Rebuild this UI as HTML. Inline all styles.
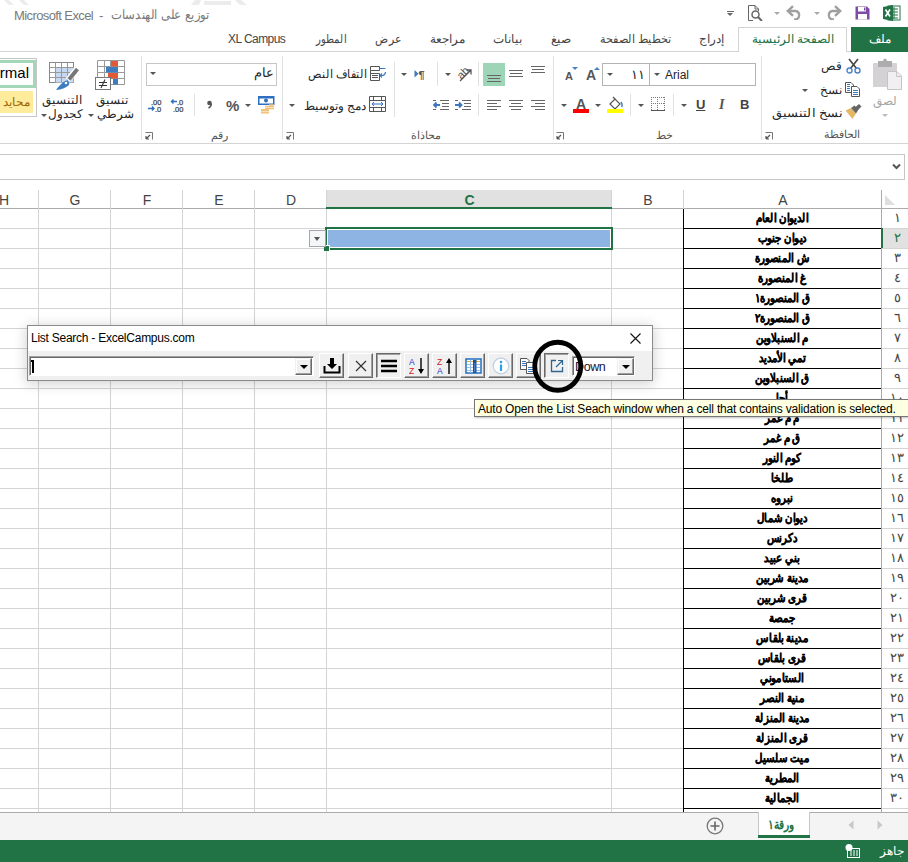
<!DOCTYPE html>
<html><head><meta charset="utf-8">
<style>
*{box-sizing:border-box}
html,body{margin:0;padding:0;width:908px;height:862px;overflow:hidden;background:#fff;font-family:"Liberation Sans",sans-serif;color:#262626}
.a{position:absolute}
.rtl{direction:rtl}
.t{white-space:nowrap;line-height:1}
/* tabs */
.tab{position:absolute;top:32px;font-size:12px;color:#444;white-space:nowrap;direction:rtl;line-height:14px}
/* grid */
#grid{position:absolute;left:0;top:190px;width:908px;height:622px;overflow:hidden;background:#fff}
.vl{position:absolute;top:0;width:1px;background:#d4d4d4}
.hl{position:absolute;left:0;height:1px;background:#d4d4d4}
.ch{position:absolute;top:3px;font-size:13px;color:#444;line-height:14px;text-align:center}
.rn{position:absolute;left:882px;width:26px;text-align:center;font-size:12px;color:#444;line-height:20px}
.av{position:absolute;left:683px;width:199px;text-align:center;font-size:12px;font-weight:bold;color:#000;line-height:20px;direction:rtl}
.glab{position:absolute;top:131px;font-size:11px;color:#444;direction:rtl;white-space:nowrap;line-height:11px}
.sep{position:absolute;width:1px;background:#e1e1e1}
.dd{position:absolute;width:0;height:0;border-left:3px solid transparent;border-right:3px solid transparent;border-top:3px solid #555}
.btn{position:absolute;top:353px;width:25px;height:25px;background:#f0f0f0;border:1px solid;border-color:#fff #696969 #696969 #fff;box-shadow:inset -1px -1px 0 #a0a0a0}
</style></head><body>

<!-- ===== TITLE BAR ===== -->
<svg class="a" style="left:0;top:0" width="260" height="6" viewBox="0 0 260 6"><path d="M4 0H9L14 5H9Z M19 0H24L29 5H24Z M195 0H201L199 5H191Z M204 1H231V5H204Z M235 0H241L247 5H240Z" fill="#ececec"/></svg>
<div class="a t" style="left:14px;top:9px;font-size:13px;color:#7a7a7a;letter-spacing:-0.6px">Microsoft Excel</div>
<div class="a t" style="left:99px;top:9px;font-size:13px;color:#7a7a7a">-</div>
<div class="a t" style="right:698px;top:9px;font-size:12.5px;color:#7a7a7a;direction:rtl;transform:scaleX(0.9);transform-origin:100% 50%">توزيع على الهندسات</div>

<!-- ===== TABS ===== -->
<div class="a" style="left:0;top:51px;width:908px;height:1px;background:#d4d4d4"></div>
<div class="a" style="left:851px;top:27px;width:57px;height:25px;background:#217346"></div>
<div class="tab" style="left:869px;color:#fff;font-weight:normal">ملف</div>
<div class="a" style="left:738px;top:27px;width:109px;height:25px;border:1px solid #d4d4d4;border-bottom:none;background:#fff"></div>
<div class="tab" style="left:752px;color:#217346">الصفحة الرئيسية</div>
<div class="tab" style="left:699px">إدراج</div>
<div class="tab" style="left:600px;transform:scaleX(0.934);transform-origin:0 50%">تخطيط الصفحة</div>
<div class="tab" style="left:551px">صيغ</div>
<div class="tab" style="left:493px">بيانات</div>
<div class="tab" style="left:430px">مراجعة</div>
<div class="tab" style="left:375px;transform:scaleX(0.9);transform-origin:0 50%">عرض</div>
<div class="tab" style="left:316px;transform:scaleX(0.84);transform-origin:0 50%">المطور</div>
<div class="tab" style="left:228px;direction:ltr;font-size:12px;letter-spacing:-0.55px">XL Campus</div>

<!-- ===== RIBBON ===== -->
<div class="a" style="left:0;top:143px;width:908px;height:1px;background:#d4d4d4"></div>
<div class="sep" style="left:761px;top:56px;height:84px"></div>
<div class="sep" style="left:553px;top:56px;height:84px"></div>
<div class="sep" style="left:282px;top:56px;height:84px"></div>
<div class="sep" style="left:141px;top:56px;height:84px"></div>

<svg class="a" style="left:883px;top:5px" width="18" height="16" viewBox="0 0 18 16"><rect x="5" y="1" width="12" height="14" fill="#fff" stroke="#217346"/><path d="M8 4h7M8 7h7M8 10h7M8 13h7M11 2v12" stroke="#217346" stroke-width="1"/><path d="M0 2L10 0V16L0 14Z" fill="#217346"/><path d="M2.5 4.5L7 11.5M7 4.5L2.5 11.5" stroke="#fff" stroke-width="1.6"/></svg>
<svg class="a" style="left:855px;top:6px" width="15" height="14" viewBox="0 0 15 14"><path d="M0.5 0.5H12L14.5 3V13.5H0.5Z" fill="#7d4ca6"/><rect x="3" y="1" width="8" height="4.5" fill="#fff"/><rect x="3" y="8" width="9" height="5.5" fill="#fff"/><rect x="9" y="1.5" width="1.5" height="3" fill="#7d4ca6"/></svg>
<svg class="a" style="left:826px;top:5px" width="16" height="15" viewBox="0 0 16 15"><path d="M14 6H6.5A4.3 4.3 0 0 0 6.5 14.5H8" fill="none" stroke="#a0a0a0" stroke-width="2.4"/><path d="M9 1.2L14.2 6L9 10.8" fill="none" stroke="#a0a0a0" stroke-width="2.4"/></svg>
<div class="a" style="left:814px;top:12px;width:0;height:0;border-left:3px solid transparent;border-right:3px solid transparent;border-top:3px solid #aaa"></div>
<svg class="a" style="left:786px;top:5px" width="16" height="15" viewBox="0 0 16 15"><path d="M2 6H9.5A4.3 4.3 0 0 1 9.5 14.5H8" fill="none" stroke="#a0a0a0" stroke-width="2.4"/><path d="M7 1.2L1.8 6L7 10.8" fill="none" stroke="#a0a0a0" stroke-width="2.4"/></svg>
<div class="a" style="left:774px;top:12px;width:0;height:0;border-left:3px solid transparent;border-right:3px solid transparent;border-top:3px solid #aaa"></div>
<svg class="a" style="left:747px;top:5px" width="16" height="16" viewBox="0 0 16 16"><path d="M1.5 0.5H8L11.5 4V6M1.5 0.5V15.5H6" fill="none" stroke="#666"/><path d="M8 0.5V4H11.5" fill="none" stroke="#666"/><circle cx="8.5" cy="9.5" r="3.5" fill="none" stroke="#666" stroke-width="1.5"/><path d="M11 12L15 16" stroke="#666" stroke-width="2"/></svg>
<div class="a" style="left:727px;top:11px;width:7px;height:1px;background:#666"></div>
<div class="a" style="left:727px;top:13px;width:0;height:0;border-left:3px solid transparent;border-right:3px solid transparent;border-top:3px solid #666"></div>
<svg class="a" style="left:872px;top:58px" width="30" height="33" viewBox="0 0 30 33"><path d="M1 6Q1 5 2 5H24Q25 5 25 6V29H1Z" fill="#d4d2d4"/><path d="M6 3H11Q11 0.5 13 0.5Q15 0.5 15 3H20V9H6Z" fill="#aeacae"/><path d="M15.5 13.5H25L29.5 18V31.5H15.5Z" fill="#f1eff1" stroke="#c6c4c6"/><path d="M24.5 13.5V18.5H29.5" fill="none" stroke="#c6c4c6"/></svg>
<div class="a t" style="left:873px;top:95px;font-size:12px;color:#a6a6a6;direction:rtl;">لصق</div>
<div class="a" style="left:882px;top:114px;width:0;height:0;border-left:3px solid transparent;border-right:3px solid transparent;border-top:3px solid #bbb"></div>
<svg class="a" style="left:846px;top:58px" width="15" height="16" viewBox="0 0 15 16"><path d="M3 1L10.5 10.5M12 1L4.5 10.5" stroke="#444" stroke-width="1.6"/><circle cx="3.5" cy="12.5" r="2.5" fill="none" stroke="#4a82c4" stroke-width="1.4"/><circle cx="11.5" cy="12.5" r="2.5" fill="none" stroke="#4a82c4" stroke-width="1.4"/></svg>
<div class="a t" style="right:66px;top:60px;font-size:12px;color:#262626;direction:rtl;">قص</div>
<svg class="a" style="left:845px;top:82px" width="16" height="15" viewBox="0 0 16 15"><path d="M0.5 0.5H6L8.5 3V10.5H0.5Z" fill="#fff" stroke="#555"/><path d="M6.5 4.5H12L14.5 7V14.5H6.5Z" fill="#fff" stroke="#555"/><path d="M2 2.5h3M2 4.5h3M2 6.5h3M2 8.5h3M8 8.5h5M8 10.5h5M8 12.5h5" stroke="#3c78c0"/></svg>
<div class="a t" style="right:66px;top:84px;font-size:12px;color:#262626;direction:rtl;">نسخ</div>
<div class="a" style="left:802px;top:89px;width:0;height:0;border-left:3px solid transparent;border-right:3px solid transparent;border-top:3px solid #555"></div>
<svg class="a" style="left:845px;top:104px" width="17" height="16" viewBox="0 0 17 16"><path d="M0.5 6.5L6 4L11 9.5L7.5 15Z" fill="#e4b867"/><path d="M6 4L9.5 1.5L13.5 5.5L11 9.5Z" fill="#666"/><path d="M10.5 3L14 0L16.5 2.5L13 6Z" fill="#666"/></svg>
<div class="a t" style="right:66px;top:107px;font-size:12px;color:#262626;direction:rtl;transform:scaleX(1.08);transform-origin:100% 50%">نسخ التنسيق</div>
<div class="a t" style="right:48px;top:129px;font-size:11px;color:#555;direction:rtl;">الحافظة</div>
<svg class="a" style="left:765px;top:132px" width="8" height="8" viewBox="0 0 8 8"><path d="M0.5 0.5H7.5V7.5" fill="none" stroke="#777" stroke-width="1"/><path d="M1 7L5 3M1 7V4M1 7H4" fill="none" stroke="#555" stroke-width="1.2"/></svg>
<div class="a" style="left:649px;top:63px;width:107px;height:23px;border:1px solid #b4b4b4;background:#fff"></div>
<div class="a" style="left:602px;top:63px;width:48px;height:23px;border:1px solid #b4b4b4;background:#fff"></div>
<div class="a t" style="left:665px;top:69px;font-size:12px;color:#262626">Arial</div>
<div class="a" style="left:654px;top:73px;width:0;height:0;border-left:3px solid transparent;border-right:3px solid transparent;border-top:3px solid #555"></div>
<div class="a" style="left:607px;top:73px;width:0;height:0;border-left:3px solid transparent;border-right:3px solid transparent;border-top:3px solid #555"></div>
<div class="a t" style="right:263px;top:68px;font-size:13px;color:#262626;direction:rtl;">١١</div>
<div class="a t" style="left:586px;top:68px;font-size:14px;color:#555;font-weight:bold">A</div>
<div class="a" style="left:594px;top:67px;width:0;height:0;border-left:3px solid transparent;border-right:3px solid transparent;border-bottom:3px solid #4a82c4"></div>
<div class="a t" style="left:565px;top:71px;font-size:11px;color:#555;font-weight:bold">A</div>
<div class="a" style="left:572px;top:67px;width:0;height:0;border-left:3px solid transparent;border-right:3px solid transparent;border-top:3px solid #4a82c4"></div>
<div class="a t" style="left:740px;top:98px;font-size:13px;font-weight:bold;color:#444">B</div>
<div class="a t" style="left:719px;top:98px;font-size:14px;font-style:italic;font-weight:bold;color:#555;font-family:'Liberation Serif',serif">I</div>
<div class="a t" style="left:696px;top:98px;font-size:13px;font-weight:bold;color:#444;text-decoration:underline">U</div>
<div class="a" style="left:681px;top:104px;width:0;height:0;border-left:3px solid transparent;border-right:3px solid transparent;border-top:3px solid #555"></div>
<div class="sep" style="left:673px;top:94px;height:22px"></div>
<svg class="a" style="left:651px;top:97px" width="14" height="14" viewBox="0 0 14 14"><path d="M0.5 0V13M13.5 0V13M6.5 0V13M0 0.5H14M0 6.5H14" fill="none" stroke="#777" stroke-dasharray="1 1"/><path d="M0 13.5H14" stroke="#555"/></svg>
<div class="a" style="left:638px;top:104px;width:0;height:0;border-left:3px solid transparent;border-right:3px solid transparent;border-top:3px solid #555"></div>
<div class="sep" style="left:630px;top:94px;height:22px"></div>
<svg class="a" style="left:606px;top:96px" width="18" height="18" viewBox="0 0 18 18"><path d="M4 8L9 3L14 8L9 13Z" fill="#fff" stroke="#555" stroke-width="1.2"/><path d="M7 1L9 3" stroke="#555" stroke-width="1.2"/><path d="M15 6Q17 9 15.5 11" fill="none" stroke="#4a82c4" stroke-width="1.5"/><rect x="1" y="13" width="16" height="4" fill="#ff0"/></svg>
<div class="a" style="left:595px;top:104px;width:0;height:0;border-left:3px solid transparent;border-right:3px solid transparent;border-top:3px solid #555"></div>
<div class="a t" style="left:576px;top:97px;font-size:14px;color:#555;font-weight:bold">A</div>
<div class="a" style="left:573px;top:109px;width:16px;height:4px;background:#f00"></div>
<div class="a" style="left:561px;top:104px;width:0;height:0;border-left:3px solid transparent;border-right:3px solid transparent;border-top:3px solid #555"></div>
<div class="a t" style="right:235px;top:130px;font-size:11px;color:#555;direction:rtl;">خط</div>
<svg class="a" style="left:556px;top:132px" width="8" height="8" viewBox="0 0 8 8"><path d="M0.5 0.5H7.5V7.5" fill="none" stroke="#777" stroke-width="1"/><path d="M1 7L5 3M1 7V4M1 7H4" fill="none" stroke="#555" stroke-width="1.2"/></svg>
<div class="a" style="left:483px;top:63px;width:22px;height:23px;background:#9fd5b7"></div>
<svg class="a" style="left:531px;top:65px" width="14" height="8" viewBox="0 0 14 8"><path d="M0 1.5H14M1 4.5H13M0 7.5H14" stroke="#666"/></svg>
<svg class="a" style="left:509px;top:69px" width="14" height="8" viewBox="0 0 14 8"><path d="M0 1.5H14M1 4.5H13M0 7.5H14" stroke="#666"/></svg>
<svg class="a" style="left:487px;top:74px" width="14" height="8" viewBox="0 0 14 8"><path d="M0 1.5H14M1 4.5H13M0 7.5H14" stroke="#666"/></svg>
<div class="sep" style="left:478px;top:62px;height:24px"></div>
<svg class="a" style="left:454px;top:64px" width="19" height="18" viewBox="0 0 19 18"><text x="2" y="13" font-size="11" font-family="Liberation Sans" fill="#555" transform="rotate(-45 8 8)">ab</text><path d="M6 17L17 6M12.5 6H17V10.5" fill="none" stroke="#555" stroke-width="1.3"/></svg>
<div class="a" style="left:445px;top:73px;width:0;height:0;border-left:3px solid transparent;border-right:3px solid transparent;border-top:3px solid #555"></div>
<div class="sep" style="left:437px;top:62px;height:24px"></div>
<svg class="a" style="left:414px;top:69px" width="15" height="11" viewBox="0 0 15 11"><path d="M0.5 1V8.5L4.5 4.75Z" fill="#3c78c0"/><text x="4.5" y="9.5" font-size="11" font-family="Liberation Sans" fill="#555" font-weight="bold">¶</text></svg>
<div class="a" style="left:401px;top:73px;width:0;height:0;border-left:3px solid transparent;border-right:3px solid transparent;border-top:3px solid #555"></div>
<div class="sep" style="left:394px;top:62px;height:55px"></div>
<svg class="a" style="left:370px;top:65px" width="17" height="16" viewBox="0 0 17 16"><path d="M0.5 1.5H9.5V5.5H0.5ZM0.5 15.5V8.5H9.5V15.5ZM2 10.5H8M2 12.5H8M0.5 5.5V8.5" fill="none" stroke="#555"/><path d="M9.5 3.5H15.5" stroke="#3c78c0"/><path d="M15.5 7A3.5 3.5 0 0 1 12 10.5H10M12 8.5L10 10.5L12 12.5" fill="none" stroke="#3c78c0" stroke-width="1.2"/></svg>
<div class="a t" style="right:542px;top:68px;font-size:12px;color:#262626;direction:rtl;transform:scaleX(0.93);transform-origin:100% 50%">التفاف النص</div>
<svg class="a" style="left:531px;top:99px" width="14" height="11" viewBox="0 0 14 11"><path d="M0 1.5H14M4 4.5H14M0 7.5H14M4 10.5H14" stroke="#666"/></svg>
<svg class="a" style="left:509px;top:99px" width="14" height="11" viewBox="0 0 14 11"><path d="M0 1.5H14M2 4.5H12M0 7.5H14M2 10.5H12" stroke="#666"/></svg>
<svg class="a" style="left:487px;top:99px" width="14" height="11" viewBox="0 0 14 11"><path d="M0 1.5H14M0 4.5H10M0 7.5H14M0 10.5H10" stroke="#666"/></svg>
<div class="sep" style="left:478px;top:94px;height:22px"></div>
<svg class="a" style="left:455px;top:99px" width="16" height="11" viewBox="0 0 16 11"><path d="M0 1.5H3M7 1.5H16M9 4.5H16M9 7.5H16M0 10.5H3M7 10.5H16" stroke="#666"/><path d="M0 6H6M4 3.5L6.5 6L4 8.5" fill="none" stroke="#3c78c0" stroke-width="1.8"/></svg>
<svg class="a" style="left:433px;top:99px" width="16" height="11" viewBox="0 0 16 11"><path d="M0 1.5H3M7 1.5H16M9 4.5H16M9 7.5H16M0 10.5H3M7 10.5H16" stroke="#666"/><path d="M1 6H7M3.5 3.5L1 6L3.5 8.5" fill="none" stroke="#3c78c0" stroke-width="1.8"/></svg>
<svg class="a" style="left:369px;top:96px" width="17" height="16" viewBox="0 0 17 16"><path d="M0.5 0.5H16.5V15.5H0.5ZM0.5 4.5H16.5M0.5 11.5H16.5M4.5 0.5V4.5M12.5 0.5V4.5M4.5 11.5V15.5M12.5 11.5V15.5" fill="none" stroke="#555"/><path d="M3 8H14M5 6L3 8L5 10M12 6L14 8L12 10" fill="none" stroke="#2f6fc0"/></svg>
<div class="a t" style="right:542px;top:100px;font-size:12px;color:#262626;direction:rtl;">دمج وتوسيط</div>
<div class="a" style="left:289px;top:104px;width:0;height:0;border-left:3px solid transparent;border-right:3px solid transparent;border-top:3px solid #555"></div>
<div class="a t" style="right:467px;top:130px;font-size:11px;color:#555;direction:rtl;">محاذاة</div>
<svg class="a" style="left:286px;top:132px" width="8" height="8" viewBox="0 0 8 8"><path d="M0.5 0.5H7.5V7.5" fill="none" stroke="#777" stroke-width="1"/><path d="M1 7L5 3M1 7V4M1 7H4" fill="none" stroke="#555" stroke-width="1.2"/></svg>
<div class="a" style="left:146px;top:63px;width:131px;height:23px;border:1px solid #c6c6c6;background:#fff"></div>
<div class="a t" style="right:634px;top:67px;font-size:12.5px;color:#262626;direction:rtl;">عام</div>
<div class="a" style="left:150px;top:72px;width:0;height:0;border-left:3px solid transparent;border-right:3px solid transparent;border-top:3px solid #555"></div>
<svg class="a" style="left:258px;top:96px" width="17" height="18" viewBox="0 0 17 18"><rect x="0.75" y="0.75" width="15" height="7.5" fill="#fff" stroke="#2f6fc0" stroke-width="1.5"/><rect x="0" y="0" width="16" height="2.5" fill="#2f6fc0"/><circle cx="8" cy="4.5" r="2" fill="#2f6fc0"/><path d="M7 10.5h9M7 12.5h9M9 10.5" stroke="#f0c27b" stroke-width="1.6"/><path d="M3 14h8M3 16.5h8" stroke="#f0c27b" stroke-width="1.8"/><path d="M11 9h5" stroke="#f0c27b" stroke-width="1.5"/></svg>
<div class="a" style="left:245px;top:104px;width:0;height:0;border-left:3px solid transparent;border-right:3px solid transparent;border-top:3px solid #555"></div>
<div class="a t" style="left:226px;top:98px;font-size:15px;color:#555;font-weight:bold">%</div>
<svg class="a" style="left:206px;top:100px" width="7" height="9" viewBox="0 0 7 9"><circle cx="3.5" cy="3" r="2.3" fill="#555"/><path d="M5.2 3.5Q5.5 6.5 2.5 8" fill="none" stroke="#555" stroke-width="1.5"/></svg>
<div class="sep" style="left:194px;top:94px;height:22px"></div>
<svg class="a" style="left:170px;top:98px" width="17" height="14" viewBox="0 0 17 14"><path d="M1.5 3.5H7M3.5 1.5L1.5 3.5L3.5 5.5" fill="none" stroke="#2f6fc0" stroke-width="1.4"/><text x="7" y="6.5" font-size="7.5" font-family="Liberation Sans" fill="#444" stroke="#444" stroke-width="0.25">.0</text><text x="3" y="13.5" font-size="7.5" font-family="Liberation Sans" fill="#444" stroke="#444" stroke-width="0.25">.00</text></svg>
<svg class="a" style="left:148px;top:98px" width="17" height="14" viewBox="0 0 17 14"><text x="3" y="6.5" font-size="7.5" font-family="Liberation Sans" fill="#444" stroke="#444" stroke-width="0.25">.00</text><path d="M0 10.5H6M4 8.5L6 10.5L4 12.5" fill="none" stroke="#2f6fc0" stroke-width="1.4"/><text x="7" y="13.5" font-size="7.5" font-family="Liberation Sans" fill="#444" stroke="#444" stroke-width="0.25">.0</text></svg>
<div class="a t" style="right:680px;top:130px;font-size:11px;color:#555;direction:rtl;">رقم</div>
<svg class="a" style="left:145px;top:132px" width="8" height="8" viewBox="0 0 8 8"><path d="M0.5 0.5H7.5V7.5" fill="none" stroke="#777" stroke-width="1"/><path d="M1 7L5 3M1 7V4M1 7H4" fill="none" stroke="#555" stroke-width="1.2"/></svg>
<div class="a" style="left:-2px;top:58px;width:39px;height:59px;border:1px solid #c6c6c6;background:#fff"></div>
<div class="a" style="left:-3px;top:60px;width:39px;height:28px;border:3px solid #a3d7b8;background:#fff"></div>
<div class="a t" style="right:879px;top:65px;font-size:15px;color:#000">Normal</div>
<div class="a" style="left:0;top:91px;width:33px;height:22px;background:#ffeb9c"></div>
<div class="a t" style="right:878px;top:96px;font-size:12px;color:#9c6500;direction:rtl;">محايد</div>
<svg class="a" style="left:49px;top:62px" width="30" height="29" viewBox="0 0 30 29"><rect x="0.5" y="0.5" width="24" height="20" fill="#fff" stroke="#888"/><rect x="6.5" y="5.5" width="18" height="15" fill="#c6d9f0"/><path d="M0.5 5.5H24.5M0.5 10.5H24.5M0.5 15.5H24.5M6.5 0.5V20.5M12.5 0.5V20.5M18.5 0.5V20.5" stroke="#999" fill="none"/><path d="M19 18L28.5 6" stroke="#fff" stroke-width="6"/><path d="M20 17.5L28.5 7" stroke="#777" stroke-width="4"/><path d="M7 28 Q12 21 17 18.5 Q21 18.5 20 23 Q15 27.5 7 28Z" fill="#3e7cc2"/><circle cx="17" cy="21" r="1.3" fill="#fff"/></svg>
<div class="a t" style="right:826px;top:94px;font-size:12px;color:#262626;direction:rtl;">التنسيق</div>
<div class="a t" style="right:825px;top:108px;font-size:12px;color:#262626;direction:rtl;">كجدول</div>
<div class="a" style="left:41px;top:114px;width:0;height:0;border-left:3px solid transparent;border-right:3px solid transparent;border-top:3px solid #555"></div>
<svg class="a" style="left:97px;top:60px" width="29" height="26" viewBox="0 0 29 26"><rect x="0.5" y="0.5" width="27" height="24" fill="#fff"/><path d="M0.5 0.5H27.5V24.5H0.5ZM0.5 6.5H27.5M0.5 12.5H27.5M0.5 18.5H27.5M7.5 0.5V24.5M13.5 0.5V24.5M20.5 0.5V24.5" stroke="#999" fill="none"/><rect x="14" y="1" width="7" height="5.5" fill="#e05a35"/><rect x="9" y="7" width="12" height="5.5" fill="#3e7cc2"/><rect x="11" y="13" width="10" height="5.5" fill="#e05a35"/><rect x="16" y="19" width="5" height="5.5" fill="#3e7cc2"/></svg>
<svg class="a" style="left:95px;top:77px" width="17" height="14" viewBox="0 0 17 14"><rect x="0.5" y="0.5" width="15" height="12" fill="#fff" stroke="#777"/><path d="M4 5.5H12M4 8.5H12M10 2.5L6 11" stroke="#333" stroke-width="1.1"/></svg>
<div class="a t" style="right:780px;top:94px;font-size:12px;color:#262626;direction:rtl;">تنسيق</div>
<div class="a t" style="right:774px;top:108px;font-size:12px;color:#262626;direction:rtl;">شرطي</div>
<div class="a" style="left:88px;top:114px;width:0;height:0;border-left:3px solid transparent;border-right:3px solid transparent;border-top:3px solid #555"></div>
<!-- ===== FORMULA BAR ===== -->
<div class="a" style="left:-2px;top:154px;width:907px;height:26px;border:1px solid #c6c6c6;background:#fff"></div>
<svg class="a" style="left:892px;top:163px" width="9" height="7" viewBox="0 0 9 7"><path d="M1 1.5L4.5 5L8 1.5" fill="none" stroke="#555" stroke-width="2"/></svg>

<!-- ===== GRID ===== -->
<div class="a" style="left:326px;top:190px;width:285px;height:18px;background:#e1e1e1"></div>
<div class="a" style="left:881px;top:228px;width:27px;height:20px;background:#e1e1e1"></div>
<div class="a" style="left:0;top:208px;width:326px;height:1px;background:#ababab"></div>
<div class="a" style="left:612px;top:208px;width:296px;height:1px;background:#ababab"></div>
<div class="a" style="left:38px;top:190px;width:1px;height:622px;background:#d4d4d4"></div>
<div class="a" style="left:110px;top:190px;width:1px;height:622px;background:#d4d4d4"></div>
<div class="a" style="left:182px;top:190px;width:1px;height:622px;background:#d4d4d4"></div>
<div class="a" style="left:254px;top:190px;width:1px;height:622px;background:#d4d4d4"></div>
<div class="a" style="left:326px;top:190px;width:1px;height:622px;background:#d4d4d4"></div>
<div class="a" style="left:611px;top:190px;width:1px;height:622px;background:#d4d4d4"></div>
<div class="a" style="left:683px;top:190px;width:1px;height:622px;background:#d4d4d4"></div>
<div class="a" style="left:881px;top:190px;width:1px;height:622px;background:#ababab"></div>
<div class="a" style="left:0;top:228px;width:683px;height:1px;background:#d4d4d4"></div>
<div class="a" style="left:882px;top:228px;width:26px;height:1px;background:#d4d4d4"></div>
<div class="a" style="left:0;top:248px;width:683px;height:1px;background:#d4d4d4"></div>
<div class="a" style="left:882px;top:248px;width:26px;height:1px;background:#d4d4d4"></div>
<div class="a" style="left:0;top:268px;width:683px;height:1px;background:#d4d4d4"></div>
<div class="a" style="left:882px;top:268px;width:26px;height:1px;background:#d4d4d4"></div>
<div class="a" style="left:0;top:288px;width:683px;height:1px;background:#d4d4d4"></div>
<div class="a" style="left:882px;top:288px;width:26px;height:1px;background:#d4d4d4"></div>
<div class="a" style="left:0;top:308px;width:683px;height:1px;background:#d4d4d4"></div>
<div class="a" style="left:882px;top:308px;width:26px;height:1px;background:#d4d4d4"></div>
<div class="a" style="left:0;top:328px;width:683px;height:1px;background:#d4d4d4"></div>
<div class="a" style="left:882px;top:328px;width:26px;height:1px;background:#d4d4d4"></div>
<div class="a" style="left:0;top:348px;width:683px;height:1px;background:#d4d4d4"></div>
<div class="a" style="left:882px;top:348px;width:26px;height:1px;background:#d4d4d4"></div>
<div class="a" style="left:0;top:368px;width:683px;height:1px;background:#d4d4d4"></div>
<div class="a" style="left:882px;top:368px;width:26px;height:1px;background:#d4d4d4"></div>
<div class="a" style="left:0;top:388px;width:683px;height:1px;background:#d4d4d4"></div>
<div class="a" style="left:882px;top:388px;width:26px;height:1px;background:#d4d4d4"></div>
<div class="a" style="left:0;top:408px;width:683px;height:1px;background:#d4d4d4"></div>
<div class="a" style="left:882px;top:408px;width:26px;height:1px;background:#d4d4d4"></div>
<div class="a" style="left:0;top:428px;width:683px;height:1px;background:#d4d4d4"></div>
<div class="a" style="left:882px;top:428px;width:26px;height:1px;background:#d4d4d4"></div>
<div class="a" style="left:0;top:448px;width:683px;height:1px;background:#d4d4d4"></div>
<div class="a" style="left:882px;top:448px;width:26px;height:1px;background:#d4d4d4"></div>
<div class="a" style="left:0;top:468px;width:683px;height:1px;background:#d4d4d4"></div>
<div class="a" style="left:882px;top:468px;width:26px;height:1px;background:#d4d4d4"></div>
<div class="a" style="left:0;top:488px;width:683px;height:1px;background:#d4d4d4"></div>
<div class="a" style="left:882px;top:488px;width:26px;height:1px;background:#d4d4d4"></div>
<div class="a" style="left:0;top:508px;width:683px;height:1px;background:#d4d4d4"></div>
<div class="a" style="left:882px;top:508px;width:26px;height:1px;background:#d4d4d4"></div>
<div class="a" style="left:0;top:528px;width:683px;height:1px;background:#d4d4d4"></div>
<div class="a" style="left:882px;top:528px;width:26px;height:1px;background:#d4d4d4"></div>
<div class="a" style="left:0;top:548px;width:683px;height:1px;background:#d4d4d4"></div>
<div class="a" style="left:882px;top:548px;width:26px;height:1px;background:#d4d4d4"></div>
<div class="a" style="left:0;top:568px;width:683px;height:1px;background:#d4d4d4"></div>
<div class="a" style="left:882px;top:568px;width:26px;height:1px;background:#d4d4d4"></div>
<div class="a" style="left:0;top:588px;width:683px;height:1px;background:#d4d4d4"></div>
<div class="a" style="left:882px;top:588px;width:26px;height:1px;background:#d4d4d4"></div>
<div class="a" style="left:0;top:608px;width:683px;height:1px;background:#d4d4d4"></div>
<div class="a" style="left:882px;top:608px;width:26px;height:1px;background:#d4d4d4"></div>
<div class="a" style="left:0;top:628px;width:683px;height:1px;background:#d4d4d4"></div>
<div class="a" style="left:882px;top:628px;width:26px;height:1px;background:#d4d4d4"></div>
<div class="a" style="left:0;top:648px;width:683px;height:1px;background:#d4d4d4"></div>
<div class="a" style="left:882px;top:648px;width:26px;height:1px;background:#d4d4d4"></div>
<div class="a" style="left:0;top:668px;width:683px;height:1px;background:#d4d4d4"></div>
<div class="a" style="left:882px;top:668px;width:26px;height:1px;background:#d4d4d4"></div>
<div class="a" style="left:0;top:688px;width:683px;height:1px;background:#d4d4d4"></div>
<div class="a" style="left:882px;top:688px;width:26px;height:1px;background:#d4d4d4"></div>
<div class="a" style="left:0;top:708px;width:683px;height:1px;background:#d4d4d4"></div>
<div class="a" style="left:882px;top:708px;width:26px;height:1px;background:#d4d4d4"></div>
<div class="a" style="left:0;top:728px;width:683px;height:1px;background:#d4d4d4"></div>
<div class="a" style="left:882px;top:728px;width:26px;height:1px;background:#d4d4d4"></div>
<div class="a" style="left:0;top:748px;width:683px;height:1px;background:#d4d4d4"></div>
<div class="a" style="left:882px;top:748px;width:26px;height:1px;background:#d4d4d4"></div>
<div class="a" style="left:0;top:768px;width:683px;height:1px;background:#d4d4d4"></div>
<div class="a" style="left:882px;top:768px;width:26px;height:1px;background:#d4d4d4"></div>
<div class="a" style="left:0;top:788px;width:683px;height:1px;background:#d4d4d4"></div>
<div class="a" style="left:882px;top:788px;width:26px;height:1px;background:#d4d4d4"></div>
<div class="a" style="left:0;top:808px;width:683px;height:1px;background:#d4d4d4"></div>
<div class="a" style="left:882px;top:808px;width:26px;height:1px;background:#d4d4d4"></div>
<div class="a" style="left:0;top:828px;width:683px;height:1px;background:#d4d4d4"></div>
<div class="a" style="left:882px;top:828px;width:26px;height:1px;background:#d4d4d4"></div>
<div class="a" style="left:683px;top:228px;width:198px;height:1px;background:#000"></div>
<div class="a" style="left:683px;top:248px;width:198px;height:1px;background:#000"></div>
<div class="a" style="left:683px;top:268px;width:198px;height:1px;background:#000"></div>
<div class="a" style="left:683px;top:288px;width:198px;height:1px;background:#000"></div>
<div class="a" style="left:683px;top:308px;width:198px;height:1px;background:#000"></div>
<div class="a" style="left:683px;top:328px;width:198px;height:1px;background:#000"></div>
<div class="a" style="left:683px;top:348px;width:198px;height:1px;background:#000"></div>
<div class="a" style="left:683px;top:368px;width:198px;height:1px;background:#000"></div>
<div class="a" style="left:683px;top:388px;width:198px;height:1px;background:#000"></div>
<div class="a" style="left:683px;top:408px;width:198px;height:1px;background:#000"></div>
<div class="a" style="left:683px;top:428px;width:198px;height:1px;background:#000"></div>
<div class="a" style="left:683px;top:448px;width:198px;height:1px;background:#000"></div>
<div class="a" style="left:683px;top:468px;width:198px;height:1px;background:#000"></div>
<div class="a" style="left:683px;top:488px;width:198px;height:1px;background:#000"></div>
<div class="a" style="left:683px;top:508px;width:198px;height:1px;background:#000"></div>
<div class="a" style="left:683px;top:528px;width:198px;height:1px;background:#000"></div>
<div class="a" style="left:683px;top:548px;width:198px;height:1px;background:#000"></div>
<div class="a" style="left:683px;top:568px;width:198px;height:1px;background:#000"></div>
<div class="a" style="left:683px;top:588px;width:198px;height:1px;background:#000"></div>
<div class="a" style="left:683px;top:608px;width:198px;height:1px;background:#000"></div>
<div class="a" style="left:683px;top:628px;width:198px;height:1px;background:#000"></div>
<div class="a" style="left:683px;top:648px;width:198px;height:1px;background:#000"></div>
<div class="a" style="left:683px;top:668px;width:198px;height:1px;background:#000"></div>
<div class="a" style="left:683px;top:688px;width:198px;height:1px;background:#000"></div>
<div class="a" style="left:683px;top:708px;width:198px;height:1px;background:#000"></div>
<div class="a" style="left:683px;top:728px;width:198px;height:1px;background:#000"></div>
<div class="a" style="left:683px;top:748px;width:198px;height:1px;background:#000"></div>
<div class="a" style="left:683px;top:768px;width:198px;height:1px;background:#000"></div>
<div class="a" style="left:683px;top:788px;width:198px;height:1px;background:#000"></div>
<div class="a" style="left:683px;top:808px;width:198px;height:1px;background:#000"></div>
<div class="a" style="left:683px;top:828px;width:198px;height:1px;background:#000"></div>
<div class="a" style="left:683px;top:209px;width:1px;height:603px;background:#000"></div>
<div class="a t" style="left:-30px;width:68px;top:193px;text-align:center;font-size:14px;color:#444;font-weight:normal">H</div>
<div class="a t" style="left:39px;width:72px;top:193px;text-align:center;font-size:14px;color:#444;font-weight:normal">G</div>
<div class="a t" style="left:111px;width:72px;top:193px;text-align:center;font-size:14px;color:#444;font-weight:normal">F</div>
<div class="a t" style="left:183px;width:72px;top:193px;text-align:center;font-size:14px;color:#444;font-weight:normal">E</div>
<div class="a t" style="left:255px;width:72px;top:193px;text-align:center;font-size:14px;color:#444;font-weight:normal">D</div>
<div class="a t" style="left:327px;width:285px;top:193px;text-align:center;font-size:14px;color:#217346;font-weight:bold">C</div>
<div class="a t" style="left:612px;width:72px;top:193px;text-align:center;font-size:14px;color:#444;font-weight:normal">B</div>
<div class="a t" style="left:684px;width:198px;top:193px;text-align:center;font-size:14px;color:#444;font-weight:normal">A</div>
<div class="a" style="left:885px;top:195px;width:0;height:0;border-right:10px solid transparent;border-bottom:10px solid #dfdfdf"></div>
<div class="a t" style="left:884px;width:26px;top:212px;text-align:center;font-size:12.5px;color:#444">١</div>
<div class="a t" style="left:683px;width:198px;top:212px;text-align:center;font-size:12px;font-weight:bold;color:#000;direction:rtl;transform:scaleX(0.85);-webkit-text-stroke:0.3px #000">الديوان العام</div>
<div class="a t" style="left:884px;width:26px;top:232px;text-align:center;font-size:12.5px;color:#217346">٢</div>
<div class="a t" style="left:683px;width:198px;top:232px;text-align:center;font-size:12px;font-weight:bold;color:#000;direction:rtl;transform:scaleX(0.85);-webkit-text-stroke:0.3px #000">ديوان جنوب</div>
<div class="a t" style="left:884px;width:26px;top:252px;text-align:center;font-size:12.5px;color:#444">٣</div>
<div class="a t" style="left:683px;width:198px;top:252px;text-align:center;font-size:12px;font-weight:bold;color:#000;direction:rtl;transform:scaleX(0.85);-webkit-text-stroke:0.3px #000">ش المنصورة</div>
<div class="a t" style="left:884px;width:26px;top:272px;text-align:center;font-size:12.5px;color:#444">٤</div>
<div class="a t" style="left:683px;width:198px;top:272px;text-align:center;font-size:12px;font-weight:bold;color:#000;direction:rtl;transform:scaleX(0.85);-webkit-text-stroke:0.3px #000">غ المنصورة</div>
<div class="a t" style="left:884px;width:26px;top:292px;text-align:center;font-size:12.5px;color:#444">٥</div>
<div class="a t" style="left:683px;width:198px;top:292px;text-align:center;font-size:12px;font-weight:bold;color:#000;direction:rtl;transform:scaleX(0.85);-webkit-text-stroke:0.3px #000">ق المنصورة١</div>
<div class="a t" style="left:884px;width:26px;top:312px;text-align:center;font-size:12.5px;color:#444">٦</div>
<div class="a t" style="left:683px;width:198px;top:312px;text-align:center;font-size:12px;font-weight:bold;color:#000;direction:rtl;transform:scaleX(0.85);-webkit-text-stroke:0.3px #000">ق المنصورة٢</div>
<div class="a t" style="left:884px;width:26px;top:332px;text-align:center;font-size:12.5px;color:#444">٧</div>
<div class="a t" style="left:683px;width:198px;top:332px;text-align:center;font-size:12px;font-weight:bold;color:#000;direction:rtl;transform:scaleX(0.85);-webkit-text-stroke:0.3px #000">م السنبلاوين</div>
<div class="a t" style="left:884px;width:26px;top:352px;text-align:center;font-size:12.5px;color:#444">٨</div>
<div class="a t" style="left:683px;width:198px;top:352px;text-align:center;font-size:12px;font-weight:bold;color:#000;direction:rtl;transform:scaleX(0.85);-webkit-text-stroke:0.3px #000">تمي الأمديد</div>
<div class="a t" style="left:884px;width:26px;top:372px;text-align:center;font-size:12.5px;color:#444">٩</div>
<div class="a t" style="left:683px;width:198px;top:372px;text-align:center;font-size:12px;font-weight:bold;color:#000;direction:rtl;transform:scaleX(0.85);-webkit-text-stroke:0.3px #000">ق السنبلاوين</div>
<div class="a t" style="left:884px;width:26px;top:392px;text-align:center;font-size:12.5px;color:#444">١٠</div>
<div class="a t" style="left:683px;width:198px;top:392px;text-align:center;font-size:12px;font-weight:bold;color:#000;direction:rtl;transform:scaleX(0.85);-webkit-text-stroke:0.3px #000">أجا</div>
<div class="a t" style="left:884px;width:26px;top:412px;text-align:center;font-size:12.5px;color:#444">١١</div>
<div class="a t" style="left:683px;width:198px;top:412px;text-align:center;font-size:12px;font-weight:bold;color:#000;direction:rtl;transform:scaleX(0.85);-webkit-text-stroke:0.3px #000">م م غمر</div>
<div class="a t" style="left:884px;width:26px;top:432px;text-align:center;font-size:12.5px;color:#444">١٢</div>
<div class="a t" style="left:683px;width:198px;top:432px;text-align:center;font-size:12px;font-weight:bold;color:#000;direction:rtl;transform:scaleX(0.85);-webkit-text-stroke:0.3px #000">ق م غمر</div>
<div class="a t" style="left:884px;width:26px;top:452px;text-align:center;font-size:12.5px;color:#444">١٣</div>
<div class="a t" style="left:683px;width:198px;top:452px;text-align:center;font-size:12px;font-weight:bold;color:#000;direction:rtl;transform:scaleX(0.85);-webkit-text-stroke:0.3px #000">كوم النور</div>
<div class="a t" style="left:884px;width:26px;top:472px;text-align:center;font-size:12.5px;color:#444">١٤</div>
<div class="a t" style="left:683px;width:198px;top:472px;text-align:center;font-size:12px;font-weight:bold;color:#000;direction:rtl;transform:scaleX(0.85);-webkit-text-stroke:0.3px #000">طلخا</div>
<div class="a t" style="left:884px;width:26px;top:492px;text-align:center;font-size:12.5px;color:#444">١٥</div>
<div class="a t" style="left:683px;width:198px;top:492px;text-align:center;font-size:12px;font-weight:bold;color:#000;direction:rtl;transform:scaleX(0.85);-webkit-text-stroke:0.3px #000">نبروه</div>
<div class="a t" style="left:884px;width:26px;top:512px;text-align:center;font-size:12.5px;color:#444">١٦</div>
<div class="a t" style="left:683px;width:198px;top:512px;text-align:center;font-size:12px;font-weight:bold;color:#000;direction:rtl;transform:scaleX(0.85);-webkit-text-stroke:0.3px #000">ديوان شمال</div>
<div class="a t" style="left:884px;width:26px;top:532px;text-align:center;font-size:12.5px;color:#444">١٧</div>
<div class="a t" style="left:683px;width:198px;top:532px;text-align:center;font-size:12px;font-weight:bold;color:#000;direction:rtl;transform:scaleX(0.85);-webkit-text-stroke:0.3px #000">دكرنس</div>
<div class="a t" style="left:884px;width:26px;top:552px;text-align:center;font-size:12.5px;color:#444">١٨</div>
<div class="a t" style="left:683px;width:198px;top:552px;text-align:center;font-size:12px;font-weight:bold;color:#000;direction:rtl;transform:scaleX(0.85);-webkit-text-stroke:0.3px #000">بني عبيد</div>
<div class="a t" style="left:884px;width:26px;top:572px;text-align:center;font-size:12.5px;color:#444">١٩</div>
<div class="a t" style="left:683px;width:198px;top:572px;text-align:center;font-size:12px;font-weight:bold;color:#000;direction:rtl;transform:scaleX(0.85);-webkit-text-stroke:0.3px #000">مدينة شربين</div>
<div class="a t" style="left:884px;width:26px;top:592px;text-align:center;font-size:12.5px;color:#444">٢٠</div>
<div class="a t" style="left:683px;width:198px;top:592px;text-align:center;font-size:12px;font-weight:bold;color:#000;direction:rtl;transform:scaleX(0.85);-webkit-text-stroke:0.3px #000">قرى شربين</div>
<div class="a t" style="left:884px;width:26px;top:612px;text-align:center;font-size:12.5px;color:#444">٢١</div>
<div class="a t" style="left:683px;width:198px;top:612px;text-align:center;font-size:12px;font-weight:bold;color:#000;direction:rtl;transform:scaleX(0.85);-webkit-text-stroke:0.3px #000">جمصة</div>
<div class="a t" style="left:884px;width:26px;top:632px;text-align:center;font-size:12.5px;color:#444">٢٢</div>
<div class="a t" style="left:683px;width:198px;top:632px;text-align:center;font-size:12px;font-weight:bold;color:#000;direction:rtl;transform:scaleX(0.85);-webkit-text-stroke:0.3px #000">مدينة بلقاس</div>
<div class="a t" style="left:884px;width:26px;top:652px;text-align:center;font-size:12.5px;color:#444">٢٣</div>
<div class="a t" style="left:683px;width:198px;top:652px;text-align:center;font-size:12px;font-weight:bold;color:#000;direction:rtl;transform:scaleX(0.85);-webkit-text-stroke:0.3px #000">قرى بلقاس</div>
<div class="a t" style="left:884px;width:26px;top:672px;text-align:center;font-size:12.5px;color:#444">٢٤</div>
<div class="a t" style="left:683px;width:198px;top:672px;text-align:center;font-size:12px;font-weight:bold;color:#000;direction:rtl;transform:scaleX(0.85);-webkit-text-stroke:0.3px #000">الستاموني</div>
<div class="a t" style="left:884px;width:26px;top:692px;text-align:center;font-size:12.5px;color:#444">٢٥</div>
<div class="a t" style="left:683px;width:198px;top:692px;text-align:center;font-size:12px;font-weight:bold;color:#000;direction:rtl;transform:scaleX(0.85);-webkit-text-stroke:0.3px #000">منية النصر</div>
<div class="a t" style="left:884px;width:26px;top:712px;text-align:center;font-size:12.5px;color:#444">٢٦</div>
<div class="a t" style="left:683px;width:198px;top:712px;text-align:center;font-size:12px;font-weight:bold;color:#000;direction:rtl;transform:scaleX(0.85);-webkit-text-stroke:0.3px #000">مدينة المنزلة</div>
<div class="a t" style="left:884px;width:26px;top:732px;text-align:center;font-size:12.5px;color:#444">٢٧</div>
<div class="a t" style="left:683px;width:198px;top:732px;text-align:center;font-size:12px;font-weight:bold;color:#000;direction:rtl;transform:scaleX(0.85);-webkit-text-stroke:0.3px #000">قرى المنزلة</div>
<div class="a t" style="left:884px;width:26px;top:752px;text-align:center;font-size:12.5px;color:#444">٢٨</div>
<div class="a t" style="left:683px;width:198px;top:752px;text-align:center;font-size:12px;font-weight:bold;color:#000;direction:rtl;transform:scaleX(0.85);-webkit-text-stroke:0.3px #000">ميت سلسيل</div>
<div class="a t" style="left:884px;width:26px;top:772px;text-align:center;font-size:12.5px;color:#444">٢٩</div>
<div class="a t" style="left:683px;width:198px;top:772px;text-align:center;font-size:12px;font-weight:bold;color:#000;direction:rtl;transform:scaleX(0.85);-webkit-text-stroke:0.3px #000">المطرية</div>
<div class="a t" style="left:884px;width:26px;top:792px;text-align:center;font-size:12.5px;color:#444">٣٠</div>
<div class="a t" style="left:683px;width:198px;top:792px;text-align:center;font-size:12px;font-weight:bold;color:#000;direction:rtl;transform:scaleX(0.85);-webkit-text-stroke:0.3px #000">الجمالية</div>
<div class="a" style="left:881px;top:228px;width:2px;height:20px;background:#217346"></div>
<div class="a" style="left:326px;top:207px;width:286px;height:2px;background:#217346"></div>
<div class="a" style="left:325px;top:227px;width:288px;height:23px;border:2px solid #217346;background:#8db4e2;box-shadow:inset 0 0 0 1px #fff"></div>
<div class="a" style="left:324px;top:245px;width:6px;height:6px;background:#217346;border:1px solid #fff;border-left:none;border-bottom:none"></div>
<div class="a" style="left:309px;top:230px;width:17px;height:17px;background:#f5f6f8;border:1px solid #a3a6ad"></div>
<div class="a" style="left:314px;top:237px;width:0;height:0;border-left:3.5px solid transparent;border-right:3.5px solid transparent;border-top:4px solid #555"></div>

<div class="a" style="left:27px;top:325px;width:626px;height:56px;box-shadow:0 2px 12px 1px rgba(0,0,0,0.18)"></div>
<div class="a" style="left:27px;top:325px;width:626px;height:56px;background:#f0f0f0;border:1px solid #8a8a8a"></div>
<div class="a" style="left:28px;top:326px;width:624px;height:25px;background:#fff"></div>
<div class="a t" style="left:31px;top:332px;font-size:12px;letter-spacing:-0.25px;color:#000">List Search - ExcelCampus.com</div>
<svg class="a" style="left:630px;top:333px" width="11" height="11" viewBox="0 0 11 11"><path d="M0.5 0.5L10.5 10.5M10.5 0.5L0.5 10.5" stroke="#111" stroke-width="1.1"/></svg>
<div class="a" style="left:29px;top:356px;width:285px;height:20px;background:#fff;border:1px solid;border-color:#a0a0a0 #fff #fff #a0a0a0;box-shadow:inset 1px 1px 0 #696969"></div>
<div class="a" style="left:32px;top:360px;width:2px;height:13px;background:#000"></div>
<div class="a" style="left:31px;top:360px;width:1px;height:2px;background:#000"></div>
<div class="a" style="left:295px;top:358px;width:17px;height:17px;background:#f0f0f0;border:1px solid;border-color:#f0f0f0 #696969 #696969 #f0f0f0;box-shadow:inset -1px -1px 0 #a0a0a0, inset 1px 1px 0 #fff"></div>
<div class="a" style="left:300px;top:365px;width:0;height:0;border-left:4px solid transparent;border-right:4px solid transparent;border-top:4px solid #000"></div>
<div class="a" style="left:319px;top:353px;width:25px;height:25px;border:1px solid;border-color:#fff #696969 #696969 #fff;box-shadow:inset -1px -1px 0 #a0a0a0;background:#f0f0f0"><svg class="a" style="left:3px;top:3px" width="18" height="18" viewBox="0 0 18 18"><path d="M1.5 9V15.5H16.5V9" fill="none" stroke="#000" stroke-width="2"/><path d="M7 1H11V7H14L9 12L4 7H7Z" fill="#000"/></svg></div>
<div class="a" style="left:348px;top:353px;width:25px;height:25px;border:1px solid;border-color:#fff #696969 #696969 #fff;box-shadow:inset -1px -1px 0 #a0a0a0;background:#f0f0f0"><svg class="a" style="left:5px;top:5px" width="14" height="14" viewBox="0 0 14 14"><path d="M2 2L12 12M12 2L2 12" stroke="#333" stroke-width="1.2"/></svg></div>
<div class="a" style="left:376px;top:353px;width:25px;height:25px;border:1px solid;border-color:#696969 #fff #fff #696969;box-shadow:inset 1px 1px 0 #a0a0a0;background:#f0f0f0"><svg class="a" style="left:4px;top:5px" width="16" height="14" viewBox="0 0 16 14"><path d="M0 2H16M0 7H16M0 12H16" stroke="#000" stroke-width="2.4"/></svg></div>
<div class="a" style="left:404px;top:353px;width:25px;height:25px;border:1px solid;border-color:#fff #696969 #696969 #fff;box-shadow:inset -1px -1px 0 #a0a0a0;background:#f0f0f0"><svg class="a" style="left:4px;top:3px" width="17" height="18" viewBox="0 0 17 18"><text x="0" y="8" font-size="8.5" font-family="Liberation Sans" fill="#2233cc">A</text><text x="0" y="17" font-size="8.5" font-family="Liberation Sans" fill="#cc2222">Z</text><path d="M12 1V14" stroke="#000" stroke-width="1.4"/><path d="M9 12H15L12 17Z" fill="#000"/></svg></div>
<div class="a" style="left:432px;top:353px;width:25px;height:25px;border:1px solid;border-color:#fff #696969 #696969 #fff;box-shadow:inset -1px -1px 0 #a0a0a0;background:#f0f0f0"><svg class="a" style="left:4px;top:3px" width="17" height="18" viewBox="0 0 17 18"><text x="0" y="8" font-size="8.5" font-family="Liberation Sans" fill="#cc2222">Z</text><text x="0" y="17" font-size="8.5" font-family="Liberation Sans" fill="#2233cc">A</text><path d="M12 4V17" stroke="#000" stroke-width="1.4"/><path d="M9 6H15L12 1Z" fill="#000"/></svg></div>
<div class="a" style="left:460px;top:353px;width:25px;height:25px;border:1px solid;border-color:#fff #696969 #696969 #fff;box-shadow:inset -1px -1px 0 #a0a0a0;background:#f0f0f0"><svg class="a" style="left:4px;top:4px" width="17" height="16" viewBox="0 0 17 16"><rect x="1" y="1" width="15" height="14" fill="#fff" stroke="#1f6fc0" stroke-width="1.5"/><path d="M2 3.5H15" stroke="#f0b030"/><path d="M2 6.5H15M2 9.5H15M2 12.5H15M5.5 2V15" stroke="#9cc0e4"/><rect x="8" y="2" width="3.5" height="13" fill="#1f4f9c"/><path d="M9.75 5v9" stroke="#5a8ad0"/></svg></div>
<div class="a" style="left:488px;top:353px;width:25px;height:25px;border:1px solid;border-color:#fff #696969 #696969 #fff;box-shadow:inset -1px -1px 0 #a0a0a0;background:#f0f0f0"><svg class="a" style="left:3px;top:3px" width="18" height="18" viewBox="0 0 18 18"><circle cx="9" cy="9" r="7.8" fill="#fff" stroke="#c0d0e0" stroke-width="1.2"/><circle cx="9" cy="5" r="1.3" fill="#2aa0e8"/><path d="M9 7.5V14" stroke="#2aa0e8" stroke-width="2.2"/></svg></div>
<div class="a" style="left:516px;top:353px;width:25px;height:25px;border:1px solid;border-color:#fff #696969 #696969 #fff;box-shadow:inset -1px -1px 0 #a0a0a0;background:#f0f0f0"><svg class="a" style="left:3px;top:4px" width="18" height="16" viewBox="0 0 18 16"><path d="M0.5 0.5H7L9 2.5V11.5H0.5Z" fill="#fff" stroke="#555"/><path d="M6.5 4.5H13L15.5 7V15.5H6.5Z" fill="#fff" stroke="#555"/><path d="M2 3.5h4M2 5.5h4M2 7.5h4M8 9.5h6M8 11.5h6M8 13.5h6" stroke="#3c78c0"/></svg></div>
<div class="a" style="left:544px;top:353px;width:25px;height:25px;border:1px solid;border-color:#696969 #fff #fff #696969;box-shadow:inset 1px 1px 0 #a0a0a0;background:#f0f0f0"><svg class="a" style="left:5px;top:5px" width="14" height="14" viewBox="0 0 14 14"><path d="M6 1.5H1.5V12.5H12.5V8" fill="none" stroke="#2f6490" stroke-width="1.3"/><path d="M6 8L12.5 1.5M8 1.5H12.5V6" fill="none" stroke="#2f6490" stroke-width="1.2"/></svg></div>
<div class="a" style="left:572px;top:356px;width:63px;height:20px;background:#fff;border:1px solid;border-color:#a0a0a0 #fff #fff #a0a0a0;box-shadow:inset 1px 1px 0 #696969"></div>
<div class="a t" style="left:575px;top:361px;font-size:12.5px;letter-spacing:-0.4px;color:#14143a">Down</div>
<div class="a" style="left:617px;top:358px;width:17px;height:17px;background:#f0f0f0;border:1px solid;border-color:#f0f0f0 #696969 #696969 #f0f0f0;box-shadow:inset -1px -1px 0 #a0a0a0, inset 1px 1px 0 #fff"></div>
<div class="a" style="left:622px;top:365px;width:0;height:0;border-left:4px solid transparent;border-right:4px solid transparent;border-top:4px solid #000"></div>
<svg class="a" style="left:530px;top:338px" width="56" height="56" viewBox="0 0 56 56"><ellipse cx="27.75" cy="28.25" rx="23" ry="24" fill="none" stroke="#000" stroke-width="4.8"/></svg>
<div class="a" style="left:474px;top:399px;width:440px;height:18px;background:#ffffe1;border:1px solid #767676;box-shadow:1px 1px 2px rgba(0,0,0,0.25)"></div>
<div class="a t" style="left:478px;top:403px;font-size:12px;letter-spacing:-0.18px;color:#000">Auto Open the List Seach window when a cell that contains validation is selected.</div>
<!-- ===== SHEET TABS ===== -->
<div class="a" style="left:0;top:812px;width:908px;height:28px;background:#f4f4f4;border-top:1px solid #ababab"></div>
<div class="a" style="left:758px;top:812px;width:52px;height:26px;background:#fff;border-left:1px solid #c6c6c6;border-right:1px solid #c6c6c6"></div>
<div class="a" style="left:758px;top:835px;width:52px;height:3px;background:#217346"></div>
<div class="a t" style="left:768px;top:818px;font-size:13px;font-weight:bold;color:#217346;direction:rtl;transform:scaleX(0.82);transform-origin:0 50%">ورقة١</div>
<svg class="a" style="left:706px;top:817px" width="18" height="18" viewBox="0 0 18 18"><circle cx="9" cy="9" r="7.8" fill="none" stroke="#777" stroke-width="1.3"/><path d="M9 4.5V13.5M4.5 9H13.5" stroke="#666" stroke-width="1.6"/></svg>
<svg class="a" style="left:848px;top:820px" width="6" height="10" viewBox="0 0 6 10"><path d="M5.5 0.5V9.5L0.5 5Z" fill="#c8c8c8"/></svg>
<svg class="a" style="left:877px;top:820px" width="6" height="10" viewBox="0 0 6 10"><path d="M0.5 0.5V9.5L5.5 5Z" fill="#c8c8c8"/></svg>
<!-- ===== STATUS BAR ===== -->
<div class="a" style="left:0;top:840px;width:908px;height:22px;background:#217346"></div>
<div class="a t" style="left:880px;top:845px;font-size:12px;color:#fff;direction:rtl">جاهز</div>
<svg class="a" style="left:845px;top:844px" width="15" height="14" viewBox="0 0 15 14"><rect x="2.5" y="4.5" width="12" height="9" fill="none" stroke="#fff"/><path d="M5 7h2M8 7h2M11 7h2M5 9h2M8 9h2M11 9h2M5 11h2M8 11h2M11 11h2" stroke="#fff"/><circle cx="4" cy="3.5" r="3.5" fill="#fff"/></svg>
</body></html>
